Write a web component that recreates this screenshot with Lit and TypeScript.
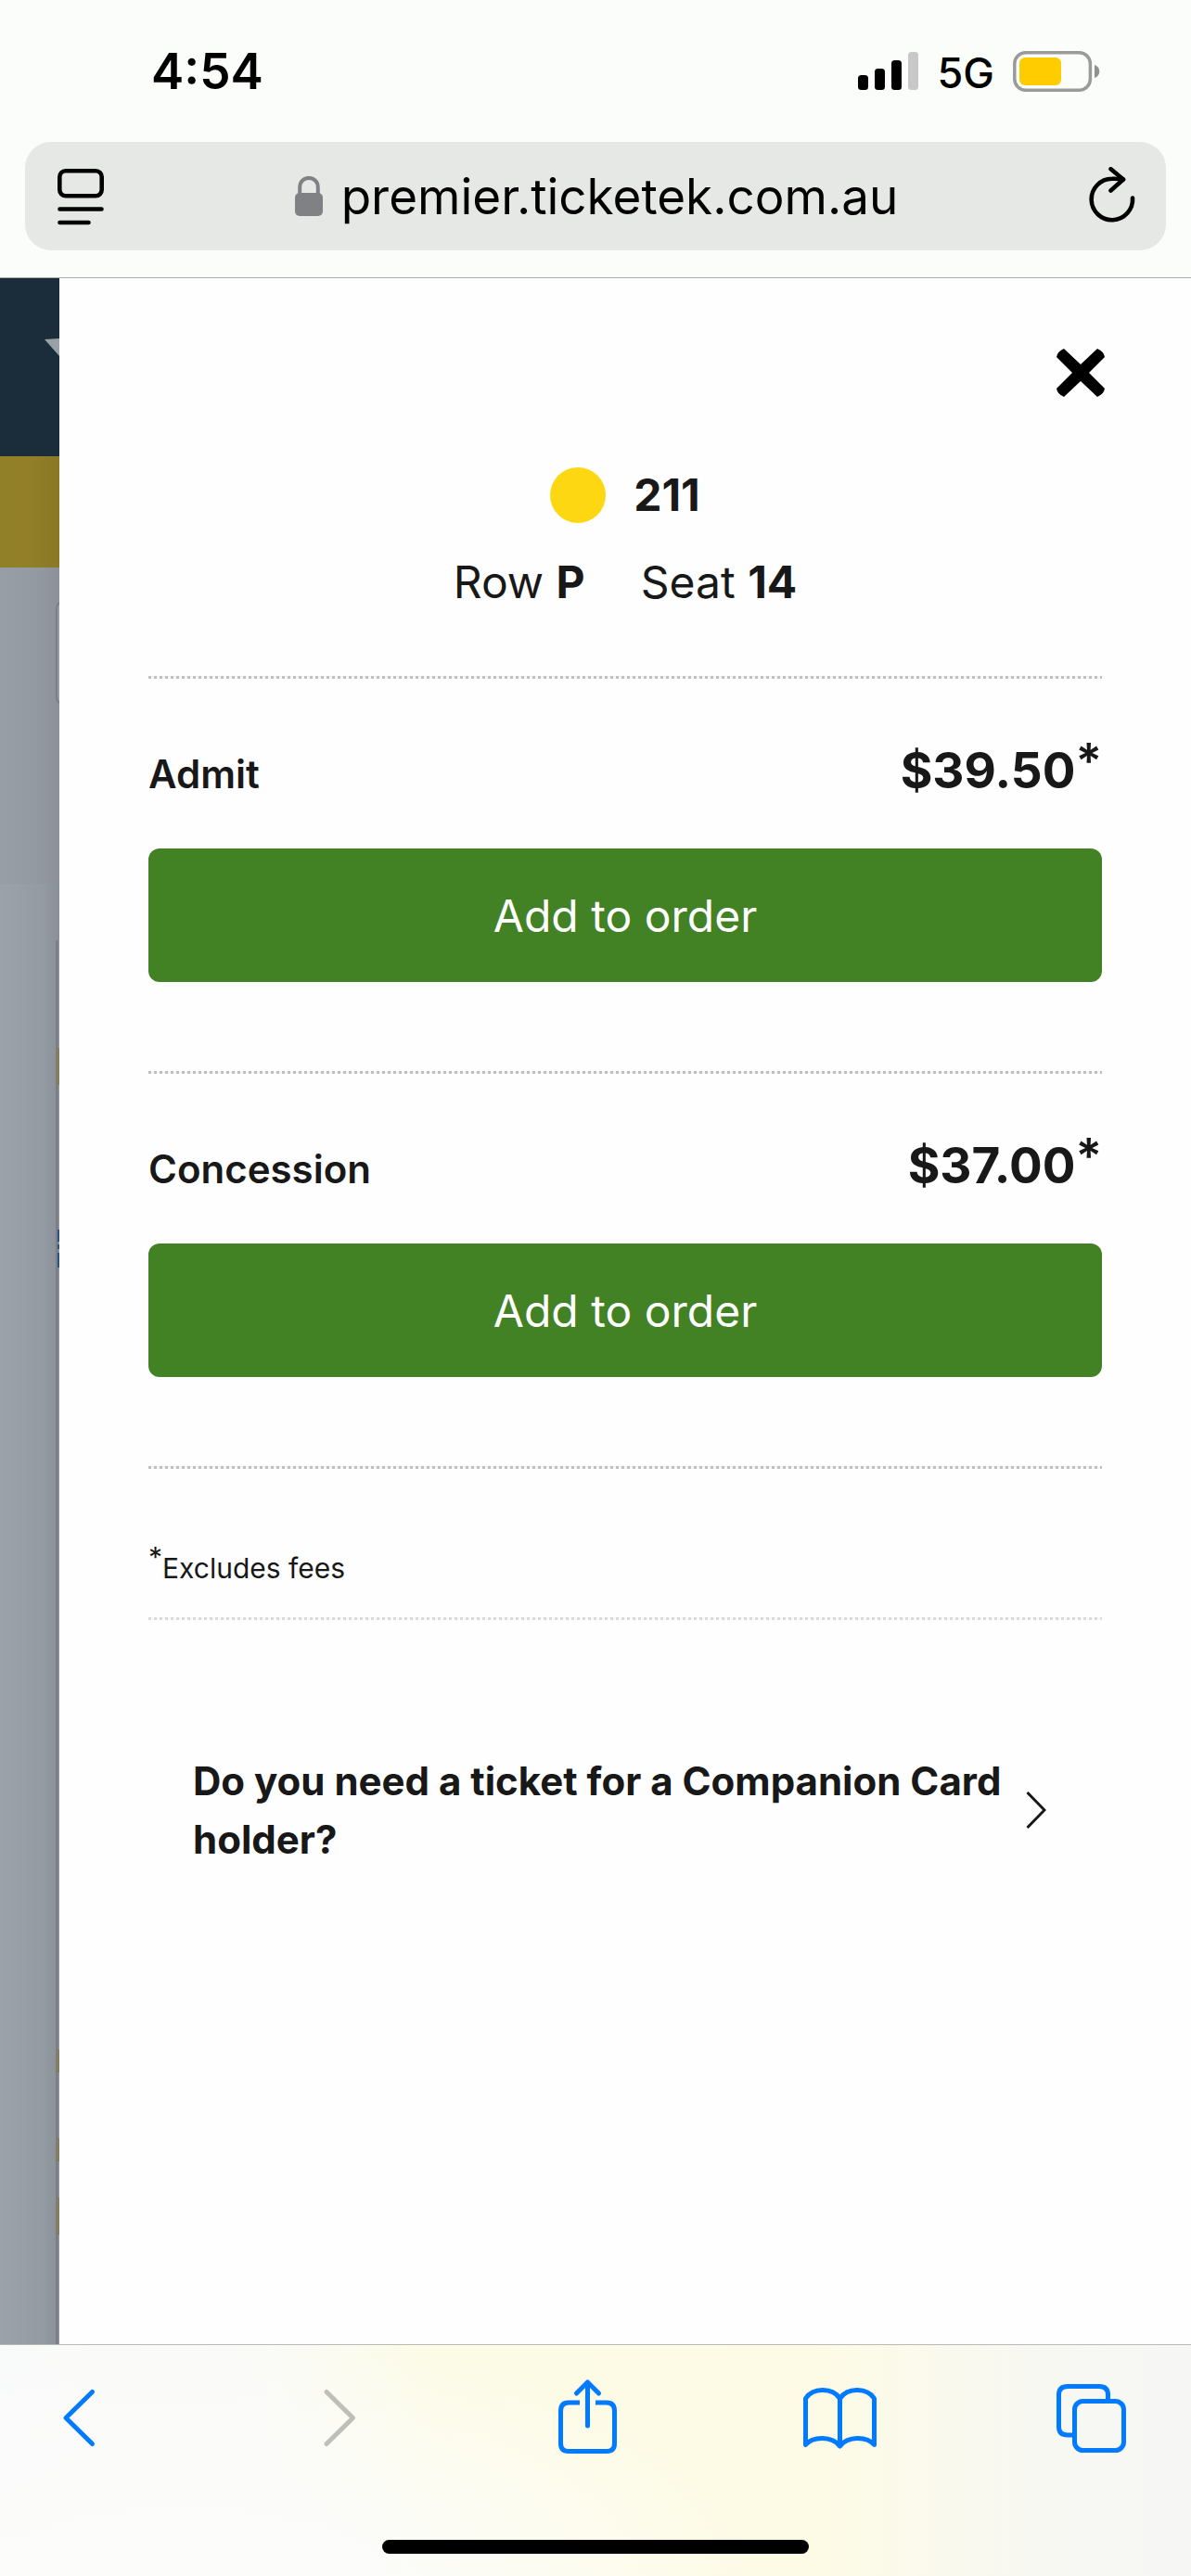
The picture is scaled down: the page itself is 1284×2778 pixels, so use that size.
import { LitElement, html, css, svg } from "lit";
import { customElement, property } from "lit/decorators.js";

interface Ticket {
  name: string;
  price: string;
}

const TICKETS: Ticket[] = [
  { name: "Admit", price: "$39.50" },
  { name: "Concession", price: "$37.00" },
];

const SIGNAL = [
  { x: 0, y: 25, on: true },
  { x: 18, y: 18, on: true },
  { x: 36, y: 9, on: true },
  { x: 54, y: 0, on: false },
];

@customElement("status-bar")
export class StatusBar extends LitElement {
  static styles = css`
    :host {
      display: flex;
      justify-content: space-between;
      align-items: center;
      height: 153px;
      padding: 0 97px 0 163px;
      color: #000;
    }
    .time {
      font-size: 53px;
      font-weight: 600;
    }
    .right {
      display: flex;
      align-items: center;
    }
    .network {
      font-size: 45px;
      font-weight: 500;
      margin: 4px 20px 0;
    }
    svg {
      display: block;
    }
  `;
  render() {
    return html`
      <span class="time">4:54</span>
      <div class="right">
        <svg width="66" height="42" viewBox="0 0 66 42" role="img" aria-label="Signal">
          ${SIGNAL.map(
            (b) => svg`<rect x=${b.x} y=${b.y} width="11" height=${41 - b.y} rx="3.5"
              fill=${b.on ? "#000" : "#c8c8c8"} />`
          )}
        </svg>
        <span class="network">5G</span>
        <svg width="95" height="44" viewBox="0 0 95 44" role="img" aria-label="Battery">
          <rect x="1.8" y="1.8" width="81.600" height="40.400" rx="12" fill="none" stroke="#999a99" stroke-width="3.5" />
          <rect x="7" y="7" width="45" height="30" rx="6" fill="#ffcc00" />
          <path d="M88 15 C95 17 95 27 88 29 Z" fill="#8f908f" />
        </svg>
      </div>
    `;
  }
}

@customElement("address-bar")
export class AddressBar extends LitElement {
  static styles = css`
    :host {
      display: block;
      padding: 0 27px 29px;
      border-bottom: 1px solid #a9abaa;
    }
    .field {
      display: flex;
      justify-content: space-between;
      align-items: center;
      height: 117px;
      padding: 0 33px 0 35px;
      border-radius: 28px;
      background: #e6e8e5;
    }
    button {
      display: flex;
      align-items: center;
      gap: 20px;
      border: 0;
      padding: 0;
      background: none;
      color: #000;
      font: inherit;
      font-size: 53px;
    }
    svg {
      display: block;
    }
  `;
  render() {
    return html`
      <div class="field">
        <button aria-label="Page menu">
          <svg width="50" height="62" viewBox="0 0 50 62" fill="none" stroke="#000" stroke-width="4.6" stroke-linecap="round">
            <rect x="2.3" y="3.3" width="45.4" height="27" rx="6.5" />
            <path d="M2.5 44.5 H47.5 M2.5 59 H33.5" />
          </svg>
        </button>
        <button>
          <svg width="30" height="44" viewBox="0 0 30 44">
            <path d="M5.2 20 V12 C5.2 -1.5 24.8 -1.5 24.8 12 V20" fill="none" stroke="#808184" stroke-width="4" />
            <rect y="18" width="30" height="25" rx="5" fill="#808184" />
          </svg>
          <span>premier.ticketek.com.au</span>
        </button>
        <button aria-label="Reload">
          <svg width="50" height="64" viewBox="0 0 50 64" fill="none" stroke="#000" stroke-width="4.6" stroke-linecap="round" stroke-linejoin="round">
            <path d="M47 33.5 A22.2 22.2 0 1 1 24.8 12.8 Q30 12.5 37 13.5" />
            <path d="M23.5 2.300 L37 13.5 L23.5 25.500" />
          </svg>
        </button>
      </div>
    `;
  }
}

@customElement("page-behind")
export class PageBehind extends LitElement {
  static styles = css`
    :host {
      display: flex;
      flex-direction: column;
      overflow: hidden;
    }
    .masthead {
      display: flex;
      justify-content: flex-end;
      height: 127px;
      padding-top: 65px;
      background: #1b2c3a;
    }
    .notice {
      height: 120px;
      background: linear-gradient(90deg, #928028, #927f28 50%, #8a7826);
    }
    .filters {
      display: flex;
      justify-content: flex-end;
      align-items: flex-start;
      height: 304px;
      padding-top: 37px;
      background: linear-gradient(90deg, #979ea5, #949aa2 60%, #8d9099);
    }
    .map {
      flex: 1;
      display: flex;
      justify-content: flex-end;
      padding-top: 61px;
      background: linear-gradient(90deg, #9ba2a9, #949ba2 70%, #8b9098);
    }
    .edge {
      width: 4px;
      background: linear-gradient(90deg, #7b7f88 3px, #9699a1 3px);
    }
    svg {
      display: block;
    }
  `;
  render() {
    return html`
      <div class="masthead">
        <svg width="16" height="20" viewBox="0 0 16 20"><path d="M0 1 L16 0 V19 Z" fill="#98a2a6" /></svg>
      </div>
      <div class="notice"></div>
      <div class="filters">
        <svg width="4" height="110" viewBox="0 0 4 110">
          <path d="M4 1 Q1 3 1 8 V102 Q1 107 4 109" fill="#989ba3" stroke="#7b7f88" stroke-width="2" />
        </svg>
      </div>
      <div class="map">
        <div class="edge">
          <svg width="4" height="1400" viewBox="0 0 4 1400">
            <path d="M0 116h4v40h-4z M0 1196h4v25h-4z M0 1292h4v25h-4z M0 1356h4v40h-4z" fill="#7e7f65" />
            <path d="M2 312h2v13h-2z M2 328h2v5h-2z M2 337h2v16h-2z" fill="#285579" />
          </svg>
        </div>
      </div>
    `;
  }
}

@customElement("ticket-option")
export class TicketOption extends LitElement {
  @property() name = "";
  @property() price = "";

  static styles = css`
    :host {
      display: block;
      padding: 66px 0 96px;
    }
    .line {
      display: flex;
      justify-content: space-between;
      align-items: baseline;
      height: 66px;
      line-height: 66px;
      margin-bottom: 51px;
    }
    .name {
      font-size: 42px;
      font-weight: 600;
    }
    .price {
      font-size: 53px;
      font-weight: 700;
    }
    sup {
      font-size: 53px;
      font-weight: 600;
      line-height: 0;
      vertical-align: 10px;
    }
    .add {
      display: block;
      width: 100%;
      height: 144px;
      border: 0;
      border-radius: 12px;
      background: #428224;
      color: #fff;
      font: inherit;
      font-size: 48px;
    }
  `;
  render() {
    return html`
      <div class="line">
        <span class="name" id="name">${this.name}</span>
        <span class="price">${this.price}<sup>*</sup></span>
      </div>
      <button class="add" aria-describedby="name">Add to order</button>
    `;
  }
}

@customElement("seat-panel")
export class SeatPanel extends LitElement {
  static styles = css`
    :host {
      display: block;
      padding: 76px 96px 96px;
      background: #fefefe;
      color: #181818;
    }
    .top {
      display: flex;
      justify-content: flex-end;
    }
    .close {
      border: 0;
      padding: 0;
      margin-right: -3px;
      background: none;
    }
    svg {
      display: block;
    }
    .seat {
      display: flex;
      flex-direction: column;
      gap: 34px;
      padding: 76px 0 71px;
      font-size: 48px;
      line-height: 60px;
    }
    .section,
    .position {
      display: flex;
      justify-content: center;
      align-items: center;
      gap: 30px;
    }
    .position {
      gap: 60px;
    }
    .dot {
      width: 60px;
      height: 60px;
      border-radius: 50%;
      background: #fdd812;
    }
    h1 {
      margin: 0;
      font: inherit;
      font-weight: 700;
    }
    .rule {
      height: 3px;
      border: 0;
      margin: 0;
      background: repeating-linear-gradient(90deg, #bfbfbf 0 3px, #f6f6f6 3px 6px);
    }
    .soft {
      background: repeating-linear-gradient(90deg, #dadada 0 3px, #fafafa 3px 6px);
    }
    .note {
      margin: 0;
      padding: 86px 0 32px;
      font-size: 30px;
      line-height: 42px;
    }
    .note sup {
      font-size: 30px;
      line-height: 0;
      vertical-align: 12px;
    }
    .companion {
      display: flex;
      justify-content: space-between;
      align-items: center;
      gap: 20px;
      margin-top: 142px;
      padding: 0 60px 0 48px;
      color: inherit;
      font-size: 42px;
      font-weight: 700;
      line-height: 63px;
      text-decoration: none;
    }
    .companion svg {
      flex: none;
    }
  `;
  render() {
    return html`
      <div class="top">
        <button class="close" aria-label="Close">
          <svg width="52" height="52" viewBox="0 0 52 52">
            <path d="M8 0 L26 17 L44 0 Q51 3 52 9 L35 26 L52 43 Q51 49 44 52 L26 35 L8 52 Q1 49 0 43 L17 26 L0 9 Q1 3 8 0 Z" />
          </svg>
        </button>
      </div>
      <div class="seat">
        <div class="section"><span class="dot"></span><h1>211</h1></div>
        <div class="position">
          <span>Row <b>P</b></span><span>Seat <b>14</b></span>
        </div>
      </div>
      <hr class="rule" />
      ${TICKETS.map(
        (t) => html`<ticket-option .name=${t.name} .price=${t.price}></ticket-option>
          <hr class="rule" />`
      )}
      <p class="note"><sup>*</sup>Excludes fees</p>
      <hr class="rule soft" />
      <a class="companion" href="#companion">
        <span>Do you need a ticket for a Companion Card holder?</span>
        <svg width="22" height="40" viewBox="0 0 22 40" fill="none" stroke="#181818" stroke-width="3">
          <path d="M1.5 1 L20 20 L1.5 39" />
        </svg>
      </a>
    `;
  }
}

@customElement("browser-toolbar")
export class BrowserToolbar extends LitElement {
  static styles = css`
    :host {
      display: block;
      border-top: 1px solid #b9bab8;
      background: radial-gradient(ellipse 50% 120% at 15% 110%, #fcfcfb 30%, #fcfcfb00 100%),
        linear-gradient(90deg, #f8faf9, #f9faf6 22%, #fcfbe6 36%, #fdfbe5 68%, #f8f8f2 86%, #f6f7f5);
    }
    .actions {
      display: flex;
      justify-content: space-between;
      padding: 31px 59px 83px 37px;
      color: #007aff;
    }
    button {
      width: 96px;
      height: 96px;
      border: 0;
      padding: 0;
      background: none;
      color: inherit;
    }
    button:disabled {
      color: #bfbfba;
    }
    svg {
      display: block;
      fill: none;
      stroke: currentColor;
      stroke-width: 5;
      stroke-linecap: round;
      stroke-linejoin: round;
    }
    .home {
      width: 36%;
      max-width: 460px;
      height: 15px;
      margin: 0 auto 24px;
      border-radius: 8px;
      background: #000;
    }
  `;
  private icon(path: unknown) {
    return html`<svg width="96" height="96" viewBox="0 0 96 96">${path}</svg>`;
  }
  render() {
    return html`
      <div class="actions">
        <button aria-label="Back">${this.icon(svg`<path d="M62.5 19.5 L34 47.5 L62.5 75.5" />`)}</button>
        <button aria-label="Forward" disabled>${this.icon(svg`<path d="M42 19.5 L70.5 47.5 L42 75.5" />`)}</button>
        <button aria-label="Share">
          ${this.icon(svg`
            <path stroke-linecap="butt" d="M42 31 H30 Q21.5 31 21.5 40 V75 Q21.5 83.5 30 83.5 H71 Q79.500 83.5 79.500 75 V40 Q79.500 31 71 31 H59" />
            <path d="M50.500 56 V9.500 M38.500 21 L50.500 9 L62.500 21" />`)}
        </button>
        <button aria-label="Bookmarks">
          ${this.icon(svg`
            <path d="M12.5 76.500 V26.500 C20 15 41 14 49.500 26.500 C58 14 79 15 86.500 26.500 V76.500 C79 67.500 58 66.500 49.500 78 C41 66.500 20 67.500 12.5 76.500 Z M49.500 26.500 V78" />`)}
        </button>
        <button aria-label="Tabs">
          ${this.icon(svg`
            <path stroke-linecap="butt" d="M28 66 H22 Q12.5 66 12.5 57 V22.500 Q12.5 13.500 22 13.500 H56 Q65.500 13.500 65.500 22.500 V28" />
            <rect x="29.500" y="29.500" width="53" height="53" rx="9" />`)}
        </button>
      </div>
      <div class="home"></div>
    `;
  }
}

@customElement("app-root")
export class AppRoot extends LitElement {
  static styles = css`
    :host {
      display: flex;
      flex-direction: column;
      min-height: 100vh;
      background: #fbfdfa;
      font-family: Inter, "Liberation Sans", sans-serif;
    }
    main {
      flex: 1;
      display: grid;
      grid-template-columns: 64px minmax(0, 1fr);
    }
  `;
  render() {
    return html`
      <status-bar></status-bar>
      <address-bar></address-bar>
      <main>
        <page-behind></page-behind>
        <seat-panel></seat-panel>
      </main>
      <browser-toolbar></browser-toolbar>
    `;
  }
}
